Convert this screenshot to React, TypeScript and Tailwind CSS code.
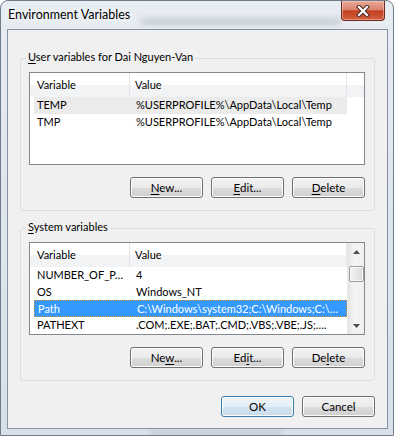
import React from 'react'

type Row = { name: string; value: string; state?: 'inactive' | 'active' }

const userRows: Row[] = [
    { name: 'TEMP', value: '%USERPROFILE%\\AppData\\Local\\Temp', state: 'inactive' },
    { name: 'TMP', value: '%USERPROFILE%\\AppData\\Local\\Temp' },
]

const systemRows: Row[] = [
    { name: 'NUMBER_OF_P…', value: '4' },
    { name: 'OS', value: 'Windows_NT' },
    { name: 'Path', value: 'C:\\Windows\\system32;C:\\Windows;C:\\…', state: 'active' },
    { name: 'PATHEXT', value: '.COM;.EXE;.BAT;.CMD;.VBS;.VBE;.JS;….' },
]

const Btn = ({ children, primary }: { children: React.ReactNode; primary?: boolean }) => (
    <button
        className={
            'w-[73px] h-[21px] rounded-[3px] border text-[11.5px] leading-none text-black shadow-[inset_0_0_0_1px_#fcfcfc] ' +
            (primary
                ? 'border-[#3c7fb1] bg-[linear-gradient(to_bottom,#eef5fa_0%,#e4eef6_50%,#d3e3f0_51%,#c9dcec_100%)]'
                : 'border-[#707070] bg-[linear-gradient(to_bottom,#f2f2f2_0%,#ebebeb_50%,#dddddd_51%,#cfcfcf_100%)]')
        }
    >
        {children}
    </button>
)

const Scrollbar = () => (
    <div className="w-[17px] flex flex-col items-center bg-[linear-gradient(to_right,#e3e3e3,#f4f4f4_35%,#f0f0f0)] border-l border-[#eaeaea]">
        <div className="h-[17px] w-full flex items-center justify-center">
            <svg width="7" height="4" viewBox="0 0 7 4">
                <path d="M0 4 L3.5 0 L7 4 Z" fill="#4d4d4d" />
            </svg>
        </div>
        <div className="mt-[6px] w-[15px] h-[16px] rounded-[2px] border border-[#9b9b9b] bg-[linear-gradient(to_right,#f3f3f3,#e8e8e8_50%,#d8d8d8)] shadow-[inset_0_0_0_1px_#fafafa]" />
        <div className="flex-1" />
        <div className="h-[17px] w-full flex items-center justify-center">
            <svg width="7" height="4" viewBox="0 0 7 4">
                <path d="M0 0 L7 0 L3.5 4 Z" fill="#4d4d4d" />
            </svg>
        </div>
    </div>
)

const ListView = ({ rows, scroll }: { rows: Row[]; scroll?: boolean }) => (
    <div className="h-[93px] border border-[#828790] bg-white flex overflow-hidden">
        <div className="flex-1 min-w-0 flex flex-col">
            <div className="flex h-[24px] items-center bg-[linear-gradient(to_bottom,#ffffff_50%,#f2f3f5_50%)] text-[11px]">
                <div className="w-[100px] shrink-0 h-full flex items-center pl-[7px] border-r border-[#e3e4e8]">Variable</div>
                <div className="w-[217px] shrink-0 h-full flex items-center pl-[5px] border-r border-[#e3e4e8]">Value</div>
            </div>
            {rows.map((r) => (
                <div
                    key={r.name}
                    className={
                        'ml-[4px] w-[313px] h-[17px] flex items-center text-[11px] whitespace-nowrap overflow-hidden ' +
                        (r.state === 'active'
                            ? 'bg-[#3399ff] text-white border border-dotted border-[#d9893a]'
                            : r.state === 'inactive'
                              ? 'bg-[#ebebeb] text-black'
                              : 'text-black')
                    }
                >
                    <div className="w-[96px] shrink-0 pl-[3px]">{r.name}</div>
                    <div className="pl-[6px]">{r.value}</div>
                </div>
            ))}
        </div>
        {scroll && <Scrollbar />}
    </div>
)

const Group = ({
    label,
    hot,
    rows,
    scroll,
    keys,
    className,
}: {
    label: string
    hot: number
    rows: Row[]
    scroll?: boolean
    keys: [number, number, number]
    className?: string
}) => {
    const mark = (text: string, i: number) => (
        <>
            {text.slice(0, i)}
            <span className="underline underline-offset-2">{text[i]}</span>
            {text.slice(i + 1)}
        </>
    )
    return (
        <div className={'relative border border-[#d5dfe5] rounded-[3px] pl-[8px] pr-[9px] pt-[13px] pb-[12px] ' + (className ?? '')}>
            <span className="absolute -top-[10px] left-[5px] bg-[#f0f0f0] px-[2px] text-[11px] leading-[16px] text-black">
                {mark(label, hot)}
            </span>
            <ListView rows={rows} scroll={scroll} />
            <div className="mt-[12px] flex justify-end gap-[8px]">
                <Btn>{mark('New...', keys[0])}</Btn>
                <Btn>{mark('Edit...', keys[1])}</Btn>
                <Btn>{mark('Delete', keys[2])}</Btn>
            </div>
        </div>
    )
}

export default function App() {
    return (
        <div className="w-[394px] h-[436px] relative flex flex-col pl-[6px] pr-[5px] pb-[6px] rounded-t-[8px] border border-[#6f7c8a] bg-[linear-gradient(to_bottom,#e8edf2,#dfe6ed_40%,#d7e0e9)] [font-family:Lato,sans-serif] overflow-hidden">
            {/* blurred background seen through the glass */}
            <div className="absolute left-[140px] top-[18px] w-[200px] h-[5px] bg-[#a9b2bb] blur-[3px] opacity-70" />
            <div className="absolute left-[150px] bottom-[1px] w-[130px] h-[3px] bg-[#b9c1c9] blur-[2px]" />

            <div className="relative h-[28px] flex items-center pl-[1px] text-[12.5px] text-black [text-shadow:0_0_6px_#ffffff,0_0_10px_#ffffff]">
                Environment Variables
            </div>

            <div className="absolute top-0 right-[8px] w-[44px] h-[20px] rounded-b-[4px] border border-t-0 border-[#6e2b1f] bg-[linear-gradient(to_bottom,#e9a899_0%,#dc8470_45%,#c3401f_52%,#d0603f_100%)] shadow-[inset_0_0_0_1px_rgba(255,220,210,0.45)] flex items-center justify-center">
                <svg width="14" height="12" viewBox="0 0 14 12">
                    <path d="M3 2 L11 10 M11 2 L3 10" stroke="#4b2a25" strokeWidth="4.2" strokeLinecap="square" />
                    <path d="M3 2 L11 10 M11 2 L3 10" stroke="#ffffff" strokeWidth="2.2" strokeLinecap="square" />
                </svg>
            </div>

            <div className="relative flex-1 flex flex-col border border-[#8493a4] bg-[#f0f0f0] px-[12px] pt-[28px]">
                <Group label="User variables for Dai Nguyen-Van" hot={0} rows={userRows} keys={[0, 0, 0]} />
                <Group label="System variables" hot={0} rows={systemRows} scroll keys={[2, 2, 2]} className="mt-[17px]" />
                <div className="mt-[15px] flex justify-end gap-[8px]">
                    <Btn primary>OK</Btn>
                    <Btn>Cancel</Btn>
                </div>
            </div>
        </div>
    )
}
